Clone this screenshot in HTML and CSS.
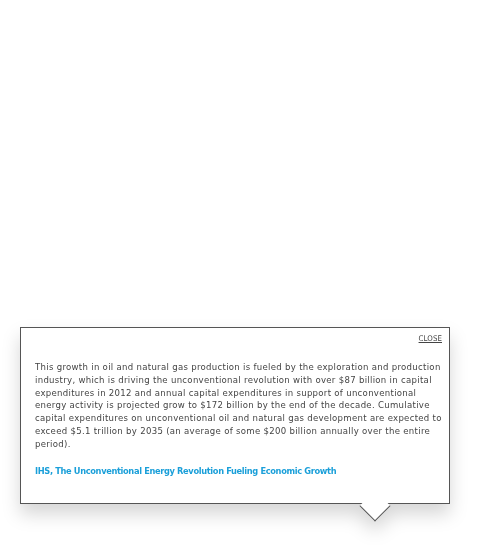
FILE: index.html
```html
<!DOCTYPE html>
<html>
<head>
<meta charset="utf-8">
<link rel="stylesheet" href="styles.css">
</head>
<body>
<div class="stage">
  <div class="popup">
    <div class="popup-head"><a class="close" href="#">CLOSE</a></div>
    <p class="quote">This growth in oil and natural gas production is fueled by the exploration and production industry, which is driving the unconventional revolution with over $87 billion in capital expenditures in 2012 and annual capital expenditures in support of unconventional energy activity is projected grow to $172 billion by the end of the decade. Cumulative capital expenditures on unconventional oil and natural gas development are expected to exceed $5.1 trillion by 2035 (an average of some $200 billion annually over the entire period).</p>
    <a class="source" href="#">IHS, The Unconventional Energy Revolution Fueling Economic Growth</a>
    <span class="arrow"></span>
  </div>
</div>
</body>
</html>
```
FILE: styles.css
```css
html, body {
  margin: 0;
  padding: 0;
  background: #fff;
}
.stage {
  width: 480px;
  height: 550px;
  padding: 327px 0 0 20px;
  box-sizing: border-box;
}
.popup {
  position: relative;
  width: 430px;
  height: 177px;
  box-sizing: border-box;
  border: 1px solid #555;
  background: #fff;
  filter: drop-shadow(0 10px 9px rgba(0, 0, 0, 0.16));
  padding: 0 5px 0 14px;
}
.popup-head {
  display: flex;
  justify-content: flex-end;
  padding: 6px 2px 0 0;
  height: 14px;
}
.close {
  font-family: "DejaVu Sans Condensed", "DejaVu Sans", sans-serif;
  font-size: 7.8px;
  color: #444;
  text-decoration: underline;
  letter-spacing: 0.1px;
}
.quote {
  margin: 13px 0 0 0;
  font-family: "DejaVu Sans Condensed", "DejaVu Sans", sans-serif;
  font-size: 9.5px;
  letter-spacing: 0.3px;
  line-height: 12.8px;
  color: #444;
}
.source {
  display: block;
  margin-top: 14px;
  font-family: "DejaVu Sans Condensed", sans-serif;
  font-weight: bold;
  font-size: 9.2px;
  letter-spacing: -0.35px;
  color: #1a9fd9;
  text-decoration: none;
}
.arrow {
  position: absolute;
  left: 343px;
  bottom: -14px;
  width: 22px;
  height: 22px;
  box-sizing: border-box;
  background: #fff;
  border-right: 1px solid #555;
  border-bottom: 1px solid #555;
  transform: rotate(45deg);
}
```
